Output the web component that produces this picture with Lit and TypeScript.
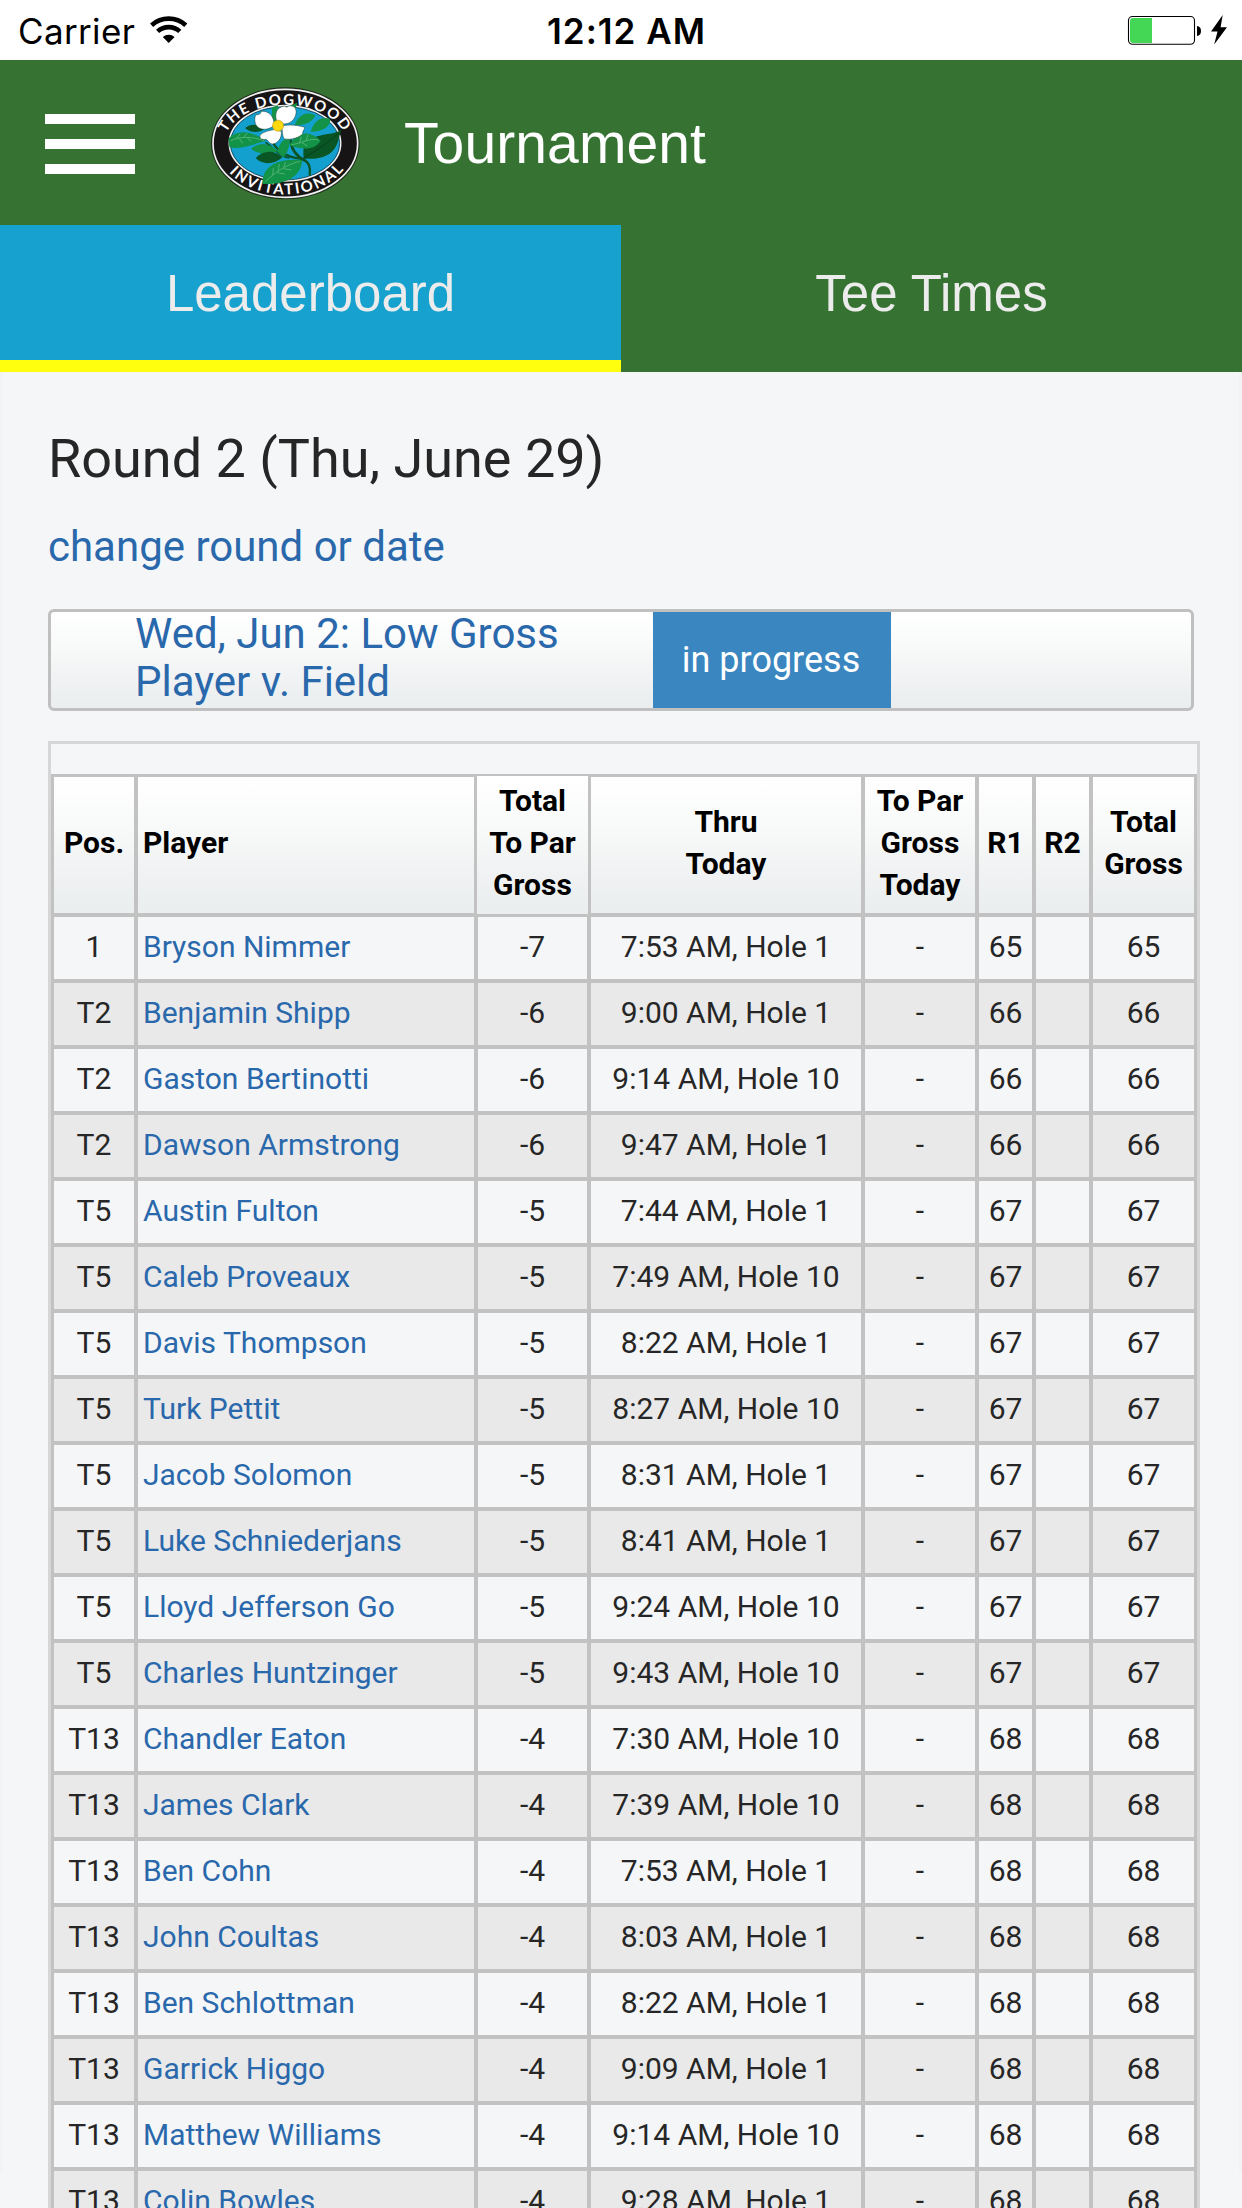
import { LitElement, html, svg, css } from "lit";
import { customElement, property } from "lit/decorators.js";
import { classMap } from "lit/directives/class-map.js";

type Row = [pos: string, player: string, total: string, thru: string, r1: string];

const ROWS: Row[] = [
  ["1", "Bryson Nimmer", "-7", "7:53 AM, Hole 1", "65"],
  ["T2", "Benjamin Shipp", "-6", "9:00 AM, Hole 1", "66"],
  ["T2", "Gaston Bertinotti", "-6", "9:14 AM, Hole 10", "66"],
  ["T2", "Dawson Armstrong", "-6", "9:47 AM, Hole 1", "66"],
  ["T5", "Austin Fulton", "-5", "7:44 AM, Hole 1", "67"],
  ["T5", "Caleb Proveaux", "-5", "7:49 AM, Hole 10", "67"],
  ["T5", "Davis Thompson", "-5", "8:22 AM, Hole 1", "67"],
  ["T5", "Turk Pettit", "-5", "8:27 AM, Hole 10", "67"],
  ["T5", "Jacob Solomon", "-5", "8:31 AM, Hole 1", "67"],
  ["T5", "Luke Schniederjans", "-5", "8:41 AM, Hole 1", "67"],
  ["T5", "Lloyd Jefferson Go", "-5", "9:24 AM, Hole 10", "67"],
  ["T5", "Charles Huntzinger", "-5", "9:43 AM, Hole 10", "67"],
  ["T13", "Chandler Eaton", "-4", "7:30 AM, Hole 10", "68"],
  ["T13", "James Clark", "-4", "7:39 AM, Hole 10", "68"],
  ["T13", "Ben Cohn", "-4", "7:53 AM, Hole 1", "68"],
  ["T13", "John Coultas", "-4", "8:03 AM, Hole 1", "68"],
  ["T13", "Ben Schlottman", "-4", "8:22 AM, Hole 1", "68"],
  ["T13", "Garrick Higgo", "-4", "9:09 AM, Hole 1", "68"],
  ["T13", "Matthew Williams", "-4", "9:14 AM, Hole 10", "68"],
  ["T13", "Colin Bowles", "-4", "9:28 AM, Hole 1", "68"],
];

@customElement("status-bar")
export class StatusBar extends LitElement {
  static styles = css`
    :host {
      display: grid;
      grid-template-columns: 1fr auto 1fr;
      align-items: center;
      height: 60px;
      padding: 0 14px 0 18px;
      box-sizing: border-box;
      background: #fff;
      color: #000;
      font: 400 35px/60px Inter, sans-serif;
    }
    .left { display: flex; align-items: center; gap: 15px; }
    .carrier { letter-spacing: 0.35px; padding-top: 1px; height: 60px; box-sizing: border-box; }
    .time { font-weight: 600; letter-spacing: 1px; padding: 1px 0 0 7px; height: 60px; box-sizing: border-box; }
    .right { display: flex; justify-content: flex-end; align-items: center; }
    svg { display: block; }
  `;
  render() {
    return html`
      <div class="left">
        <span class="carrier">Carrier</span>
        <svg width="38" height="60" viewBox="150 0 38 60">
          <path d="M151.6 25.2 A25.5 25.5 0 0 1 185.8 25.2" fill="none" stroke="#000" stroke-width="4.6" />
          <path d="M157.6 31.4 A16.5 16.5 0 0 1 179.8 31.4" fill="none" stroke="#000" stroke-width="4.6" />
          <path d="M168.7 43 L162.8 37 A8.6 8.6 0 0 1 174.6 37 Z" />
        </svg>
      </div>
      <span class="time">12:12 AM</span>
      <div class="right">
        <svg width="102" height="60" viewBox="1126 0 102 60">
          <rect x="1128.5" y="16.5" width="66" height="27.8" rx="4" fill="#fff" stroke="#000" stroke-width="1.1" />
          <path d="M1152 18 H1133 Q1130 18 1130 21 V40 Q1130 43 1133 43 H1152 Z" fill="#44d755" />
          <path d="M1197 26 Q1201 26.4 1201 31 Q1201 35.6 1197 36 Z" />
          <path d="M1222.7 15 L1211 31.4 L1217.5 31.4 L1214.2 44.4 L1227 27.3 L1220.6 27.3 Z" />
        </svg>
      </div>
    `;
  }
}

@customElement("club-logo")
export class ClubLogo extends LitElement {
  static styles = css`
    :host { display: block; }
    svg { display: block; }
    .ring-text { font-family: Lato, sans-serif; font-weight: 700; fill: #fff; }
  `;
  render() {
    return html`
      <svg width="190" height="140" viewBox="0 0 570 420">
        <defs>
          <path id="top" d="M103 220 A182 116 0 0 1 467 220" />
          <path id="bottom" d="M81 220 A205 153 0 0 0 491 220" />
        </defs>
        <ellipse cx="286" cy="220" rx="223" ry="168" fill="#1c2a1c" />
        <ellipse cx="286" cy="220" rx="217" ry="162" fill="#171415" stroke="#f1f1f1" stroke-width="5" />
        <ellipse cx="285" cy="220" rx="167" ry="113" fill="#14a0cf" stroke="#f1f1f1" stroke-width="5" />
        <ellipse cx="285" cy="220" rx="164" ry="110" fill="none" stroke="#123" stroke-width="2" />
        <text class="ring-text" font-size="45" letter-spacing="5" text-anchor="middle">
          <textPath href="#top" startOffset="50%">THE DOGWOOD</textPath>
        </text>
        <text class="ring-text" font-size="45" letter-spacing="6.500" text-anchor="middle">
          <textPath href="#bottom" startOffset="51.500%">INVITATIONAL</textPath>
        </text>
        ${svg`
          <g fill="none" stroke="#0b5526" stroke-linecap="round">
            <path d="M359 314 C363 285 352 270 330 266 C300 262 268 250 250 220" stroke-width="7" />
            <path d="M345 272 C318 258 304 240 302 212" stroke-width="8" />
            <path d="M228 218 C252 232 262 258 296 264" stroke-width="5" />
          </g>
          <path d="M454 180 C425 198 368 188 344 224 C338 238 340 256 342 266 C388 268 434 262 446 206 Z" fill="#0a5524" />
          <path d="M340 264 C385 240 412 218 446 190" fill="none" stroke="#05401a" stroke-width="3" />
          <path d="M116 205 C140 178 185 180 228 214 C195 218 165 240 118 232 Z" fill="#139348" />
          <path d="M165 174 C182 160 205 160 222 178 C205 190 180 188 165 174 Z" fill="#0a5524" />
          <path d="M183 236 C208 214 236 218 264 243 C232 254 205 254 183 236 Z" fill="#139348" />
          <path d="M197 264 C222 238 254 240 278 262 C250 286 215 284 197 264 Z" fill="#0a5524" />
          <path d="M218 342 C214 300 248 262 336 270 C336 310 300 346 218 342 Z" fill="#139348" />
          <path d="M298 226 C318 188 355 176 392 212 C372 244 330 238 298 226 Z" fill="#139348" />
          <path d="M362 186 C370 154 392 138 420 146 C424 168 400 184 362 186 Z" fill="#139348" />
          <path d="M314 164 C326 134 350 122 376 136 C366 158 342 168 314 164 Z" fill="#139348" />
          <path d="M262 246 C268 218 280 206 300 204 C298 232 292 250 280 262 Z" fill="#139348" />
          <path d="M246 112 L264 106 L260 160 L246 150 Z M290 112 L322 98 L314 124 Z" fill="#139348" />
          <g fill="none" stroke="#6cc08d" stroke-width="2">
            <path d="M226 336 C250 310 290 282 330 274" />
            <path d="M248 316 L250 294 M264 303 L268 282 M282 292 L286 276 M262 308 L284 312 M280 296 L304 300" />
            <path d="M122 212 C150 198 190 200 222 212 M140 204 L150 192 M160 202 L172 190 M148 206 L158 220 M172 204 L184 214" />
            <path d="M304 224 C330 222 360 202 386 210 M328 220 L334 200 M348 212 L354 194 M336 218 L352 228" />
          </g>
          <g fill="#fff" stroke="#1b3a2a" stroke-width="1.500">
            <path d="M262 160 C252 132 258 112 284 108 C288 112 292 112 296 108 C318 104 322 124 316 138 C310 156 290 166 274 160 Z" />
            <path d="M252 158 C250 138 236 122 214 124 C212 132 206 136 198 134 C192 144 194 158 200 168 C214 184 238 178 250 168 Z" />
            <path d="M254 178 C240 182 220 184 210 196 C208 206 216 210 226 208 C236 208 234 220 246 222 C262 222 276 206 274 184 Z" />
            <path d="M276 168 C298 162 326 166 344 172 C344 180 336 184 338 192 C320 208 294 210 282 206 C276 196 278 184 276 176 Z" />
          </g>
          <circle cx="264" cy="167" r="16.500" fill="#ffd90f" stroke="#c49a10" stroke-width="2" />
        `}
      </svg>
    `;
  }
}

@customElement("app-header")
export class AppHeader extends LitElement {
  static styles = css`
    :host { display: block; background: #367231; font-family: "Liberation Sans", Arial, sans-serif; }
    .bar { display: flex; align-items: center; height: 165px; padding-left: 45px; box-sizing: border-box; }
    .menu { display: flex; flex-direction: column; gap: 15px; width: 90px; margin-top: 3px; }
    .menu span { height: 10px; background: #fff; }
    .logo { margin: -5px 0 0 55px; }
    .title { margin: 0 0 0 24px; font-size: 57px; line-height: 60px; font-weight: 400; color: #fff; letter-spacing: 0.1px; }
    .tabs { display: grid; grid-template-columns: 1fr 1fr; }
    .tab {
      height: 135px;
      border-bottom: 12px solid transparent;
      line-height: 137px;
      text-align: center;
      font-size: 51px;
      color: #ececec;
    }
    .active { background: #16a1ce; background-clip: padding-box; border-bottom-color: #ffff0e; }
  `;
  render() {
    return html`
      <div class="bar">
        <div class="menu"><span></span><span></span><span></span></div>
        <club-logo class="logo"></club-logo>
        <h1 class="title">Tournament</h1>
      </div>
      <nav class="tabs">
        <div class="tab active">Leaderboard</div>
        <div class="tab">Tee Times</div>
      </nav>
    `;
  }
}

@customElement("leader-table")
export class LeaderTable extends LitElement {
  @property({ attribute: false }) rows: Row[] = [];

  static styles = css`
    :host {
      display: block;
      width: 1146px;
      padding-top: 30px;
      border: 3px solid #d6d6d6;
      border-bottom: 0;
      font: 30px/42px Roboto, sans-serif;
      color: #262626;
    }
    .grid { display: flex; flex-direction: column; gap: 4px; padding: 3px; background: #c2c2c2; }
    .row {
      display: grid;
      grid-template-columns: 80px 336px 109px 270px 110px 53px 53px 101px;
      column-gap: 4px;
      height: 62px;
    }
    .cell {
      display: flex;
      align-items: center;
      justify-content: center;
      text-align: center;
      white-space: pre;
      padding-bottom: 2px;
      background: #f5f6f8;
    }
    .alt .cell { background: #e9e9e9; }
    .player { justify-content: flex-start; padding-left: 5px; }
    .body .player { color: #2a68ac; }
    .head { height: 136px; color: #000; font-weight: 700; }
    .head .cell { padding-bottom: 4px; background: linear-gradient(#ffffff, #f8f9f9 38%, #eff1f2 75%, #eaeeee); }
    .head .sorted { margin: -1px; }
  `;

  render() {
    const heads = ["Pos.", "Player", "Total\nTo Par\nGross", "Thru\nToday", "To Par\nGross\nToday", "R1", "R2", "Total\nGross"];
    return html`
      <div class="grid">
        <div class="row head">
          ${heads.map((h, i) => html`<div class=${classMap({ cell: true, player: i === 1, sorted: i === 2 })}>${h}</div>`)}
        </div>
        ${this.rows.map(([pos, player, total, thru, r1], n) => html`
          <div class=${classMap({ row: true, body: true, alt: n % 2 === 1 })}>
            ${[pos, player, total, thru, "-", r1, "", r1].map(
              (v, i) => html`<div class=${classMap({ cell: true, player: i === 1 })}>${v}</div>`
            )}
          </div>
        `)}
      </div>
    `;
  }
}

@customElement("app-root")
export class AppRoot extends LitElement {
  static styles = css`
    :host {
      display: block;
      width: 1242px;
      height: 2208px;
      overflow: hidden;
      background: #f5f6f8;
      font-family: Roboto, sans-serif;
      color: #262626;
    }
    .content {
      height: 1800px;
      box-sizing: border-box;
      padding: 51px 0 0 45px;
      border: solid #f2f3f3;
      border-width: 0 3px;
    }
    .round { margin: 0; font-size: 54px; line-height: 72px; font-weight: 400; }
    .change { display: block; margin-top: 28px; font-size: 42px; line-height: 48px; color: #2a68ac; }
    .event {
      display: flex;
      width: 1146px;
      height: 102px;
      box-sizing: border-box;
      margin: 38px 0 30px;
      border: 3px solid #c0c0c0;
      border-radius: 6px;
      background: linear-gradient(#ffffff, #f8f9f9 38%, #eff1f2 75%, #eaeeee);
    }
    .name {
      width: 602px;
      box-sizing: border-box;
      padding-left: 84px;
      margin-top: -2px;
      font-size: 42px;
      line-height: 48px;
      white-space: pre;
      color: #2a68ac;
    }
    .status {
      width: 238px;
      box-sizing: border-box;
      padding-right: 2px;
      background: #3a86c0;
      color: #fff;
      font-size: 36px;
      line-height: 96px;
      text-align: center;
    }
  `;
  render() {
    return html`
      <status-bar></status-bar>
      <app-header></app-header>
      <main class="content">
        <h2 class="round">Round 2 (Thu, June 29)</h2>
        <a class="change">change round or date</a>
        <section class="event">
          <div class="name">Wed, Jun 2: Low Gross
Player v. Field</div>
          <div class="status">in progress</div>
        </section>
        <leader-table .rows=${ROWS}></leader-table>
      </main>
    `;
  }
}
